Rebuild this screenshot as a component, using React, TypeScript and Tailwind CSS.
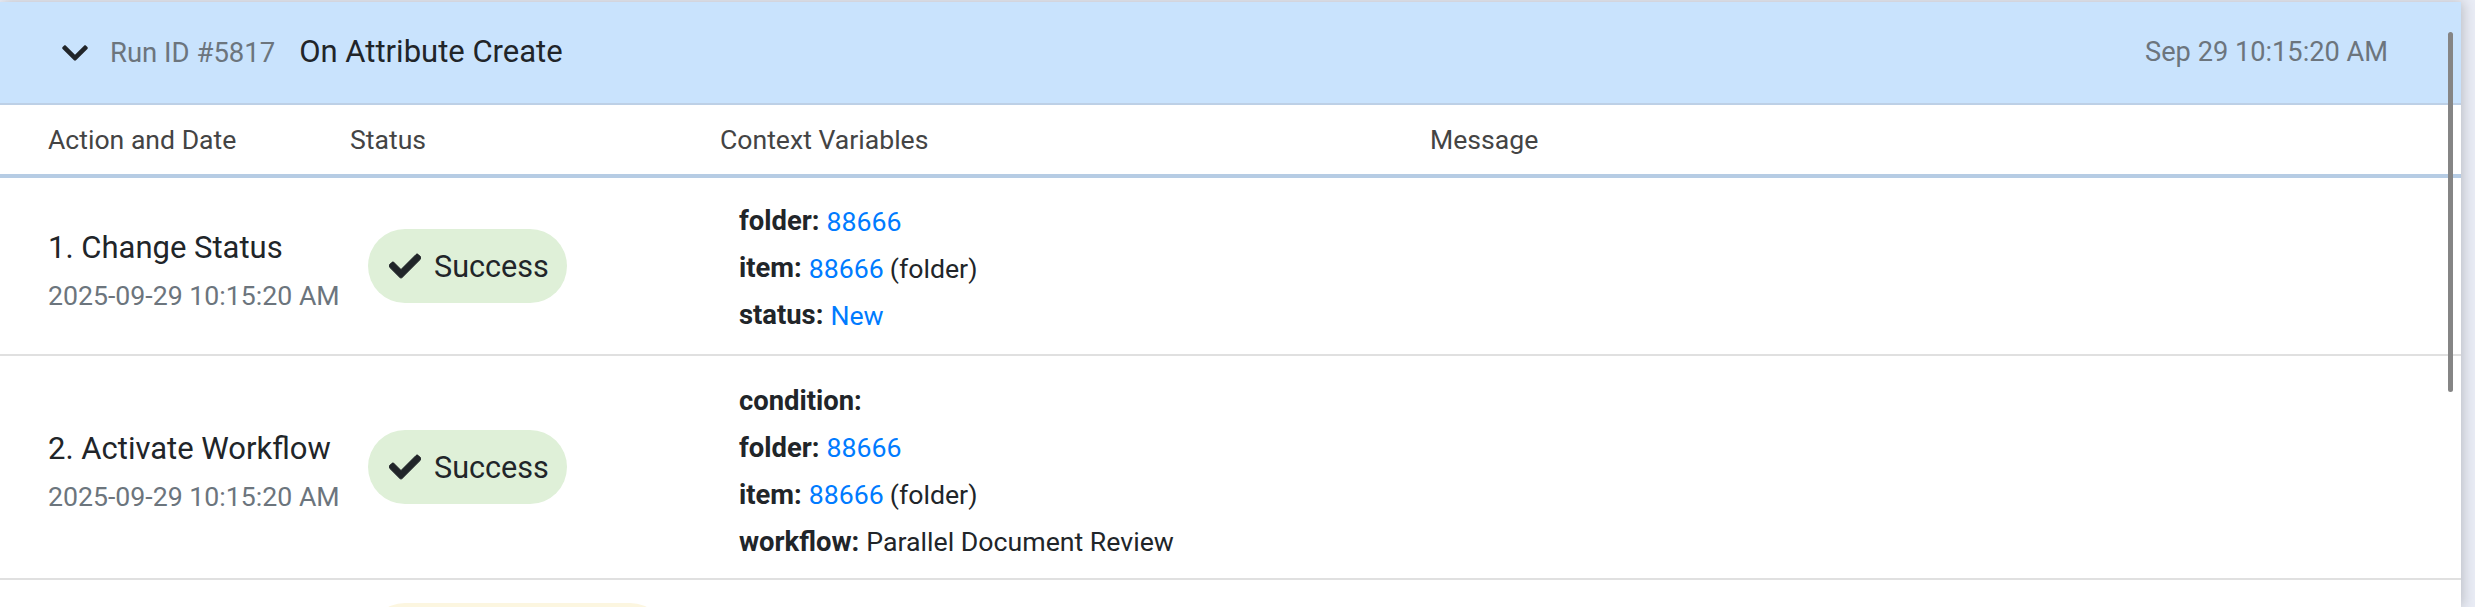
import { FaCheck, FaChevronDown } from "react-icons/fa";

const Link = ({ children }: { children: React.ReactNode }) => <span className="text-[#007bff]">{children}</span>;

const Line = ({ label, children }: { label: string; children?: React.ReactNode }) => (
  <div className="h-[47px] flex items-center">
    <b className="font-bold text-[27.4px] mr-[7px]">{label}</b>
    {children}
  </div>
);

const Status = () => (
  <div className="flex items-center gap-[13px] h-[74px] w-[199px] pl-[21px] rounded-[37px] bg-[#dff0d8] text-[#212529] text-[30.6px]">
    <FaCheck className="w-[32px] h-[32px] fill-[#212529] stroke-[#212529] stroke-[16px]" />
    <span className="pt-[2px]">Success</span>
  </div>
);

const Step = ({ title, children, h, ctx }: { title: string; children: React.ReactNode; h: string; ctx: string }) => (
  <div className={`flex items-center border-b-2 border-[#e0e0e0] ${h}`}>
    <div className="w-[368px] pl-[48px] mt-[7px]">
      <div className="text-[31px] text-[#212529] leading-[44px]">{title}</div>
      <div className="text-[26.7px] text-[#6c757d] leading-[36px] mt-[8px]">2025-09-29 10:15:20 AM</div>
    </div>
    <Status />
    <div className={`ml-[172px] text-[26.7px] text-[#212529] ${ctx}`}>{children}</div>
  </div>
);

export default function App() {
  return (
    <div className="h-[607px] overflow-hidden pt-[2px] bg-[#e9ecf5] font-['Roboto',sans-serif]">
      <div className="relative w-[2461px] h-[605px] bg-white shadow-[2px_0_12px_rgba(0,0,0,0.2)] overflow-hidden">
        <div className="h-[103px] bg-[#c9e3fd] border-b-2 border-[#bdd0e6] flex items-center pl-[60px] pr-[73px]">
          <FaChevronDown className="w-[30px] h-[30px] text-[#212529]" />
          <span className="ml-[20px] text-[27.5px] text-[#6c757d]">Run ID #5817</span>
          <span className="ml-[24px] text-[31px] text-[#212529]">On Attribute Create</span>
          <span className="ml-auto text-[27.2px] text-[#6c757d]">Sep 29 10:15:20 AM</span>
        </div>
        <div className="h-[73px] flex items-center border-b-4 border-[#b6cce4] text-[26.6px] text-[#444]">
          <span className="w-[350px] pl-[48px]">Action and Date</span>
          <span className="w-[370px]">Status</span>
          <span className="w-[710px]">Context Variables</span>
          <span>Message</span>
        </div>
        <Step title="1. Change Status" h="h-[178px]" ctx="mt-[6px]">
          <Line label="folder:"><Link>88666</Link></Line>
          <Line label="item:"><Link>88666</Link><span className="ml-[6px]">(folder)</span></Line>
          <Line label="status:"><Link>New</Link></Line>
        </Step>
        <Step title="2. Activate Workflow" h="h-[224px]" ctx="mt-[10px]">
          <Line label="condition:" />
          <Line label="folder:"><Link>88666</Link></Line>
          <Line label="item:"><Link>88666</Link><span className="ml-[6px]">(folder)</span></Line>
          <Line label="workflow:">Parallel Document Review</Line>
        </Step>
        <div className="ml-[368px] mt-[23px] w-[299px] h-[74px] rounded-[37px] bg-[#fcf6e0]" />
        <div className="absolute right-[8px] top-[30px] w-[5px] h-[360px] rounded-full bg-[#858585]" />
      </div>
    </div>
  );
}
